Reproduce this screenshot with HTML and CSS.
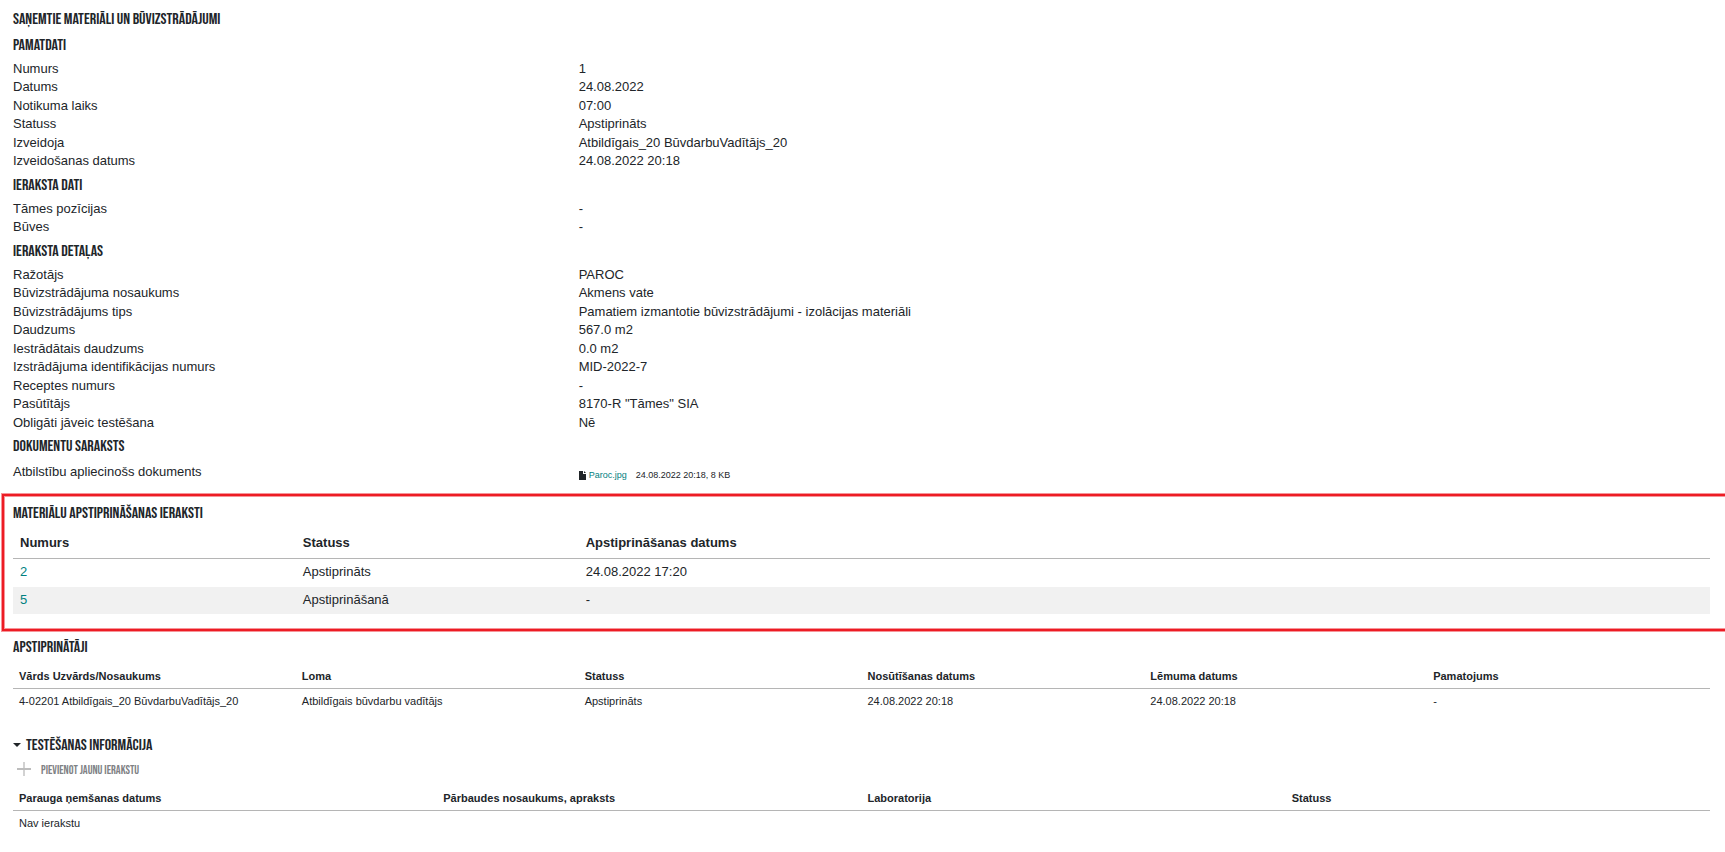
FILE: index.html
```html
<!DOCTYPE html>
<html lang="lv">
<head>
<meta charset="utf-8">
<title>Saņemtie materiāli un būvizstrādājumi</title>
<link rel="stylesheet" href="styles.css">
</head>
<body>
<main class="page">
  <h1 class="heading">Saņemtie materiāli un būvizstrādājumi</h1>

  <section class="section">
    <h2 class="heading">Pamatdati</h2>
    <dl class="fields">
      <div class="field"><dt>Numurs</dt><dd>1</dd></div>
      <div class="field"><dt>Datums</dt><dd>24.08.2022</dd></div>
      <div class="field"><dt>Notikuma laiks</dt><dd>07:00</dd></div>
      <div class="field"><dt>Statuss</dt><dd>Apstiprināts</dd></div>
      <div class="field"><dt>Izveidoja</dt><dd>Atbildīgais_20 BūvdarbuVadītājs_20</dd></div>
      <div class="field"><dt>Izveidošanas datums</dt><dd>24.08.2022 20:18</dd></div>
    </dl>
  </section>

  <section class="section">
    <h2 class="heading">Ieraksta dati</h2>
    <dl class="fields">
      <div class="field"><dt>Tāmes pozīcijas</dt><dd>-</dd></div>
      <div class="field"><dt>Būves</dt><dd>-</dd></div>
    </dl>
  </section>

  <section class="section">
    <h2 class="heading">Ieraksta detaļas</h2>
    <dl class="fields">
      <div class="field"><dt>Ražotājs</dt><dd>PAROC</dd></div>
      <div class="field"><dt>Būvizstrādājuma nosaukums</dt><dd>Akmens vate</dd></div>
      <div class="field"><dt>Būvizstrādājums tips</dt><dd>Pamatiem izmantotie būvizstrādājumi - izolācijas materiāli</dd></div>
      <div class="field"><dt>Daudzums</dt><dd>567.0 m2</dd></div>
      <div class="field"><dt>Iestrādātais daudzums</dt><dd>0.0 m2</dd></div>
      <div class="field"><dt>Izstrādājuma identifikācijas numurs</dt><dd>MID-2022-7</dd></div>
      <div class="field"><dt>Receptes numurs</dt><dd>-</dd></div>
      <div class="field"><dt>Pasūtītājs</dt><dd>8170-R "Tāmes" SIA</dd></div>
      <div class="field"><dt>Obligāti jāveic testēšana</dt><dd>Nē</dd></div>
    </dl>
  </section>

  <section class="section">
    <h2 class="heading">Dokumentu saraksts</h2>
    <dl class="fields documents">
      <div class="field">
        <dt>Atbilstību apliecinošs dokuments</dt>
        <dd class="file">
          <svg class="file-icon" viewBox="0 0 7 9" aria-hidden="true"><path d="M0 0H4V3H7V9H0ZM5 0L7 2H5Z" fill="currentColor"/></svg>
          <a class="link" href="#paroc">Paroc.jpg</a>
          <span class="file-meta">24.08.2022 20:18, 8 KB</span>
        </dd>
      </div>
    </dl>
  </section>

  <section class="highlight">
    <h2 class="heading">Materiālu apstiprināšanas ieraksti</h2>
    <table class="table table-large">
      <colgroup><col class="sixth"><col class="sixth"><col></colgroup>
      <thead><tr><th>Numurs</th><th>Statuss</th><th>Apstiprināšanas datums</th></tr></thead>
      <tbody>
        <tr><td><a class="link" href="#2">2</a></td><td>Apstiprināts</td><td>24.08.2022 17:20</td></tr>
        <tr><td><a class="link" href="#5">5</a></td><td>Apstiprināšanā</td><td>-</td></tr>
      </tbody>
    </table>
  </section>

  <section class="approvers">
    <h2 class="heading">Apstiprinātāji</h2>
    <table class="table table-small">
      <thead><tr><th>Vārds Uzvārds/Nosaukums</th><th>Loma</th><th>Statuss</th><th>Nosūtīšanas datums</th><th>Lēmuma datums</th><th>Pamatojums</th></tr></thead>
      <tbody>
        <tr><td>4-02201 Atbildīgais_20 BūvdarbuVadītājs_20</td><td>Atbildīgais būvdarbu vadītājs</td><td>Apstiprināts</td><td>24.08.2022 20:18</td><td>24.08.2022 20:18</td><td>-</td></tr>
      </tbody>
    </table>
  </section>

  <section class="tests">
    <h2 class="heading">
      <button class="toggle" type="button" aria-expanded="true">
        <svg class="caret" viewBox="0 0 8 8" aria-hidden="true"><path d="M0 1H8L4 5Z" fill="currentColor"/></svg>
        Testēšanas informācija
      </button>
    </h2>
    <button class="add" type="button">
      <svg class="plus" viewBox="0 0 14 14" aria-hidden="true"><path d="M6 0H8V14H6Z" fill="#d2d2d2"/><path d="M0 6H14V8H0Z" fill="#bdbdbd"/></svg>
      Pievienot jaunu ierakstu
    </button>
    <table class="table table-small">
      <thead><tr><th>Parauga ņemšanas datums</th><th>Pārbaudes nosaukums, apraksts</th><th>Laboratorija</th><th>Statuss</th></tr></thead>
      <tbody><tr><td colspan="4">Nav ierakstu</td></tr></tbody>
    </table>
  </section>
</main>
</body>
</html>
```
FILE: styles.css
```css
* {
  box-sizing: border-box;
}

body {
  margin: 0;
  background: #fff;
  color: #212529;
  font: 13px/18px "Liberation Sans", Arial, sans-serif;
}

.page {
  padding: 7px 15px 16px 13px;
  overflow: hidden;
}

.heading {
  margin: 0;
  font-family: "Bebas Neue", "Liberation Sans Narrow", "Liberation Sans", sans-serif;
  font-size: 16px;
  font-weight: 400;
  line-height: 26px;
  text-transform: uppercase;
}

.section + .section {
  margin-top: 2px;
}

.fields,
.field dd {
  margin: 0;
}

.fields {
  padding-top: 1px;
}

.field {
  display: grid;
  grid-template-columns: 1fr 2fr;
}

.field:nth-child(even) {
  padding-bottom: 1px;
}

.documents {
  padding-top: 3px;
}

.file {
  display: flex;
  align-items: center;
  gap: 3px;
  padding-top: 3px;
  font-size: 9px;
}

.file-icon {
  width: 7px;
  height: 9px;
}

.file-meta {
  margin-left: 6px;
}

.link {
  color: #008080;
  text-decoration: none;
}

.highlight {
  margin: 10px -20px 0 -11px;
  padding: 5px 18px 15px 9px;
  border: 2px solid #ed1c24;
  box-shadow: 0 0 0 1px #f69499, inset 0 0 0 1px #f69499;
}

.table {
  width: 100%;
  table-layout: fixed;
  border-collapse: separate;
  border-spacing: 0;
}

.sixth {
  width: 16.6667%;
}

.table th {
  border-bottom: 1px solid #b5b5b5;
  font-weight: 700;
  text-align: left;
}

.table-large th {
  padding: 7px 7px 6px;
}

.table-large td {
  padding: 4px 7px 5px;
}

.table-large tbody tr:first-child td {
  padding-bottom: 6px;
}

.table-large tbody tr:nth-child(even) {
  background: #f1f1f1;
}

.table-small {
  font-size: 11px;
}

.table-small th {
  padding: 6px 6px 3px;
}

.table-small td {
  padding: 3px 6px 5px;
}

.approvers {
  margin-top: 4px;
}

.tests {
  margin-top: 18px;
}

.toggle,
.add {
  display: flex;
  align-items: center;
  padding: 0;
  border: 0;
  background: none;
  color: inherit;
  font: inherit;
  text-transform: uppercase;
}

.toggle {
  gap: 5px;
}

.caret {
  width: 8px;
  height: 8px;
}

.add {
  gap: 10px;
  padding: 0 0 0 4px;
  color: #808285;
  font: 400 12px/24px "Bebas Neue", "Liberation Sans Narrow", "Liberation Sans", sans-serif;
}

.plus {
  width: 14px;
  height: 14px;
  margin-bottom: 4px;
}
```
